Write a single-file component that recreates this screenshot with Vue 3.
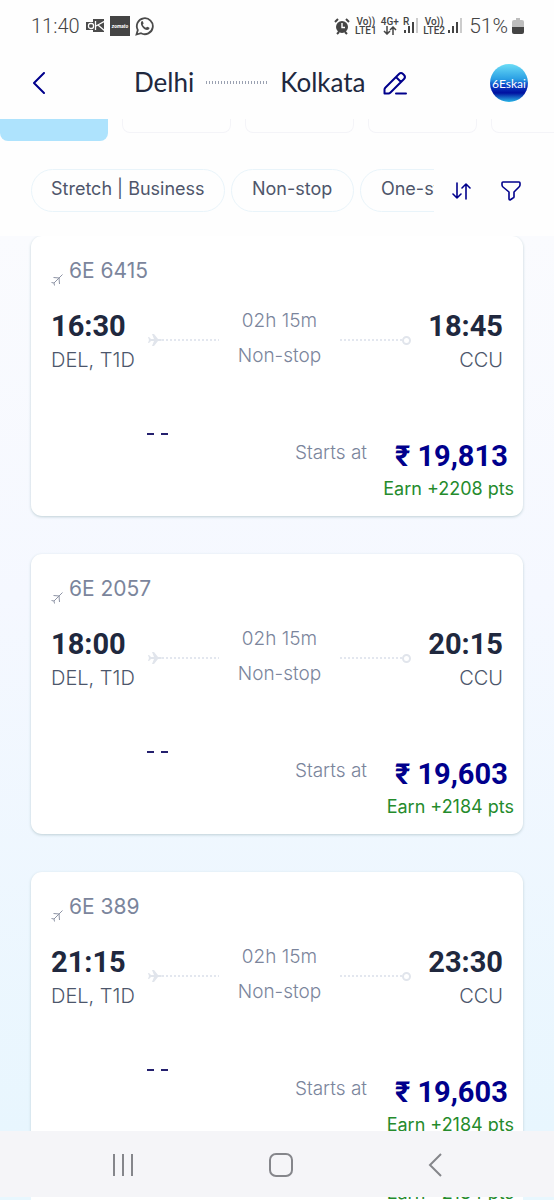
<script setup>
const tabs = [1, 2, 3, 4]
const filters = ['Stretch | Business', 'Non-stop', 'One-stop']
const flights = [
  { no: '6E 6415', dep: '16:30', arr: '18:45', price: '19,813', pts: '2208' },
  { no: '6E 2057', dep: '18:00', arr: '20:15', price: '19,603', pts: '2184' },
  { no: '6E 389', dep: '21:15', arr: '23:30', price: '19,603', pts: '2184' },
]
</script>

<template>
  <div class="screen">
    <div class="status">
      <span class="clock">11:40</span>
      <svg class="mail" width="19" height="16" viewBox="0 0 19 16"><path fill="#4b4b4b" d="M7 1h11v13H7v-2H0V4h7z" /><rect x="2.500" y="5.500" width="5" height="5" rx="2" fill="none" stroke="#fff" stroke-width="1.300" /><path d="M9.500 3v9M10 8l9-5M12 7l7 6" fill="none" stroke="#fff" stroke-width="1.300" /></svg>
      <span class="zomato">zomato</span>
      <svg class="chat" width="20" height="20" viewBox="0 0 20 20"><path d="M1.500 18.500 2.800 14A8 8 0 1 1 6 17.200z" fill="none" stroke="#4b4b4b" stroke-width="1.800" /><path d="M6.200 5.800c.7-1 1.500-.8 1.800 0l.6 1.700-.9 1.300c.8 1.500 1.800 2.400 3.300 3l1.100-1.100 2 .9c.6.4.4 1.500-.4 2-3.400 2.100-9.200-3.900-7.500-7.800z" fill="#4b4b4b" /></svg>
      <div class="signals">
        <svg width="16" height="17" viewBox="0 0 16 17"><circle cx="8" cy="9" r="6" fill="#444" /><path d="M1 4l3-3M15 4l-3-3M3 16l2-2M13 16l-2-2" stroke="#444" stroke-width="2" /><path d="M8 5v4.500h3" fill="none" stroke="#fff" stroke-width="1.400" /></svg>
        <span class="net volte">Vo))<br />LTE1</span>
        <span class="net gen">4G+<svg width="14" height="9" viewBox="0 0 14 9"><path d="M4 0v8M1 5l3 3 3-3M10 9V1M7 4l3-3 3 3" fill="none" stroke="#444" stroke-width="1.500" /></svg></span>
        <span class="roam">R</span>
        <svg class="bars" width="14" height="16" viewBox="0 0 14 16"><path d="M1 12v3M5 8v7M9 4v11" stroke="#444" stroke-width="2" /><path d="M13 0v15" stroke="#ccc" stroke-width="2" /></svg>
        <span class="net volte">Vo))<br />LTE2</span>
        <svg class="bars2" width="14" height="16" viewBox="0 0 14 16"><path d="M1 12v3M5 8v7M9 4v11" stroke="#444" stroke-width="2" /><path d="M13 0v15" stroke="#ccc" stroke-width="2" /></svg>
        <span class="percent">51%</span>
        <svg width="12" height="16" viewBox="0 0 12 16"><path d="M4 0h4v2h2q2 0 2 2v5H0V4q0-2 2-2h2z" fill="#bdbdbd" /><path d="M0 9h12v5q0 2-2 2H2q-2 0-2-2z" fill="#444" /></svg>
      </div>
    </div>

    <header class="top">
      <button class="back" aria-label="Back"><svg width="12" height="22" viewBox="0 0 12 22"><path d="M11 1 1 11l10 10" /></svg></button>
      <h1 class="route"><span>Delhi</span><i class="dash"></i><span>Kolkata</span></h1>
      <button class="edit" aria-label="Edit search"><svg width="24" height="24" viewBox="0 0 24 24"><path d="M1.500 22.500v-4q0-1 1-2L16 3q2-2 4 0l1 1q2 2 0 4L7.500 21.500q-1 1-2 1zM13 6l5 5M13 22.500h10" /></svg></button>
      <button class="skai">6Eskai</button>
    </header>

    <div class="tabs"><button class="tab on" aria-label="Selected date"></button><button v-for="t in tabs" :key="t" class="tab" aria-label="Date"></button></div>

    <div class="filters">
      <div class="chips"><button v-for="f in filters" :key="f" class="chip">{{ f }}</button></div>
      <button class="tool" aria-label="Sort"><svg width="20" height="18" viewBox="0 0 20 18"><path d="M5 1v15M1 12l4 4 4-4M14 17V2M10 6l4-4 4 4" /></svg></button>
      <button class="tool" aria-label="Filter"><svg width="20" height="20" viewBox="0 0 20 20"><path d="M2 1h16q1 0 1 1v2q0 1-1 2l-5 5v5q0 1-1 1l-3 2q-1 0-1-1v-7L2 6Q1 5 1 4V2q0-1 1-1z" /></svg></button>
    </div>

    <main class="list">
      <article v-for="f in flights" :key="f.no" class="card">
        <div class="number">
          <svg width="12" height="12" viewBox="0 0 12 12"><path d="M11.500.5 3 9M2.500 3.500 8.500 4M8 4l.5 6M.5 8.500 3 9l.5 2.500" /></svg>
          <span>{{ f.no }}</span>
        </div>
        <div class="leg">
          <div class="end"><b>{{ f.dep }}</b><span>DEL, T1D</span></div>
          <div class="track"><svg width="14" height="12" viewBox="0 0 14 12"><path d="M0 3h1l2 2h3L4 0h2l4 5h3q2 1 0 2h-3l-4 5H4l2-5H3L1 9H0l1-3z" /></svg><i></i></div>
          <div class="info"><span>02h 15m</span><span>Non-stop</span></div>
          <div class="track right"><i></i><em></em></div>
          <div class="end last"><b>{{ f.arr }}</b><span>CCU</span></div>
        </div>
        <div class="fare">
          <span class="none"><i></i><i></i></span>
          <span class="starts">Starts at</span>
          <strong>₹ {{ f.price }}</strong>
        </div>
        <div class="earn">Earn +{{ f.pts }} pts</div>
      </article>
    </main>

    <nav class="nav">
      <button aria-label="Recent apps"><svg width="22" height="22" viewBox="0 0 22 22"><path d="M2 0v22M11 0v22M20 0v22" /></svg></button>
      <button aria-label="Home"><svg width="24" height="24" viewBox="0 0 24 24"><rect x="1" y="1" width="22" height="22" rx="6" /></svg></button>
      <button aria-label="Back"><svg width="14" height="24" viewBox="0 0 14 24"><path d="M13 1 2 12l11 11" /></svg></button>
    </nav>
    <div class="under"><div><span>Earn +2184 pts</span></div></div>
  </div>
</template>

<style>
body { margin: 0; }
</style>

<style scoped>
* { box-sizing: border-box; }
.screen { height: 100vh; display: flex; flex-direction: column; overflow: hidden; background: #fefefe; font-family: Inter, "Open Sans", sans-serif; color: #20283e; }
button { border: 0; background: none; padding: 0; font: inherit; color: inherit; display: flex; align-items: center; justify-content: center; }
svg { flex: none; }
.status { flex: none; height: 52px; display: flex; align-items: center; padding: 0 30px 0 31px; color: #444; }
.clock { font: 300 20px Roboto, sans-serif; width: 55px; }
.zomato { width: 20px; height: 20px; margin: 0 5px; background: #444; color: #fff; font: italic 700 5px/20px Roboto, sans-serif; text-align: center; }
.signals { margin-left: auto; display: flex; align-items: center; }
.net { font: 500 10px/9px Roboto, sans-serif; }
.volte { width: 22px; margin-left: 5px; text-align: center; }
.gen { width: 20px; margin-left: 3px; display: flex; flex-direction: column; align-items: center; }
.roam { font: 500 10px/10px Roboto, sans-serif; align-self: flex-start; margin: 3px -5px 0 3px; }
.bars2 { margin-left: 3px; }
.percent { font: 300 21px Roboto, sans-serif; margin: 0 4px 0 7px; }
.top { flex: none; height: 62px; display: flex; align-items: center; padding: 0 26px 0 33px; }
.back svg, .edit svg { fill: none; stroke: #00008c; stroke-width: 2; stroke-linejoin: round; stroke-linecap: round; }
.route { margin: 0 0 2px 89px; display: flex; align-items: center; font: 400 26px Lato, sans-serif; }
.dash { width: 62px; height: 3px; margin: 0 12px; background: repeating-linear-gradient(90deg, #9aa1b1 0 1px, transparent 1px 3px); }
.edit { margin-left: 17px; }
.skai { margin-left: auto; width: 38px; height: 38px; border-radius: 50%; background: linear-gradient(#6bdcf6, #2a9fe4 40%, #0a3cc4 58%, #0010a0 76%, #2ab8e8); color: #fff; font: 400 12px Lato, sans-serif; }
.tabs { flex: none; height: 55px; padding-top: 5px; display: flex; gap: 14px; overflow: hidden; }
.tab { flex: none; width: 109px; height: 14px; border: 1px solid #f4f4f8; border-top: 0; border-radius: 0 0 8px 8px; }
.tab.on { width: 108px; height: 22px; background: #aee3fd; border: 0; }
.filters { flex: none; height: 67px; padding: 0 33px 0 31px; display: flex; align-items: flex-start; }
.chips { flex: 1; display: flex; gap: 6px; overflow: hidden; margin-right: 18px; }
.chip { flex: none; min-width: 123px; height: 43px; padding: 0 19px 4px; border: 1px solid #e9f4fa; border-radius: 22px; font-size: 18px; color: #4f566b; }
.tool { height: 43px; }
.tool + .tool { margin-left: 29px; }
.tool svg { fill: none; stroke: #00008c; stroke-width: 1.6; stroke-linecap: round; stroke-linejoin: round; }
.list { flex: 1; min-height: 0; overflow: hidden; padding: 0 31px; background: linear-gradient(#fafbfe, #f5f8ff 40%, #e8f6fe); display: flex; flex-direction: column; gap: 38px; }
.card { flex: none; height: 280px; background: #fff; border-radius: 11px; box-shadow: 0 1px 3px #bfd0d6; padding: 20px 20px 0; }
.number { height: 28px; display: flex; align-items: center; gap: 6px; font-size: 21px; color: #7b859c; }
.number svg { align-self: flex-end; margin-bottom: -2px; fill: none; stroke: #8e94a5; stroke-width: 1; }
.leg { display: flex; margin-top: 23px; height: 68px; }
.end { width: 97px; display: flex; flex-direction: column; }
.end b { font: 700 29px/38px Roboto, sans-serif; }
.end span { font-size: 20px; line-height: 30px; font-weight: 300; color: #4c566b; white-space: nowrap; }
.last { width: 92px; text-align: right; }
.last b { align-self: flex-end; }
.track { flex: 1; display: flex; align-items: center; height: 66px; }
.track svg { fill: #e1e5ec; }
.track i { flex: 1; max-width: 57px; height: 2px; background: repeating-linear-gradient(90deg, #e3e7ef 0 2px, transparent 2px 4px); }
.track em { width: 9px; height: 9px; border: 2px solid #e1e5ec; border-radius: 50%; }
.track.right { justify-content: flex-end; }
.track.right i { max-width: 62px; }
.info { width: 86px; display: flex; flex-direction: column; align-items: center; margin-top: -4px; font-size: 19px; line-height: 35px; color: #7b859c; font-weight: 300; white-space: nowrap; }
.fare { display: flex; align-items: center; height: 40px; margin-top: 61px; }
.none { display: flex; gap: 7px; margin: -3px 0 0 96px; align-self: flex-start; }
.none i { width: 7px; height: 2px; background: #24206e; }
.starts { margin: 0 0 8px auto; font-size: 19px; font-weight: 300; color: #7b859c; }
.fare strong { font: 700 29px Roboto, "Noto Sans", sans-serif; color: #00008c; width: 112px; margin: 0 -4px 0 28px; white-space: nowrap; }
.earn { text-align: right; margin-right: -11px; font-size: 18px; line-height: 26px; color: #258b2c; }
.nav { flex: none; height: 66px; background: #f5f5f8; display: flex; align-items: center; padding: 2px 112px 0; justify-content: space-between; }
.nav svg { fill: none; stroke: #85868b; stroke-width: 2; }
.under { flex: none; height: 3px; overflow: hidden; background: #e8f7fe; padding: 0 31px; }
.under div { background: #fff; display: flex; justify-content: flex-end; padding-right: 9px; height: 3px; align-items: flex-end; color: #258b2c; font-size: 18px; line-height: 14px; }
</style>
